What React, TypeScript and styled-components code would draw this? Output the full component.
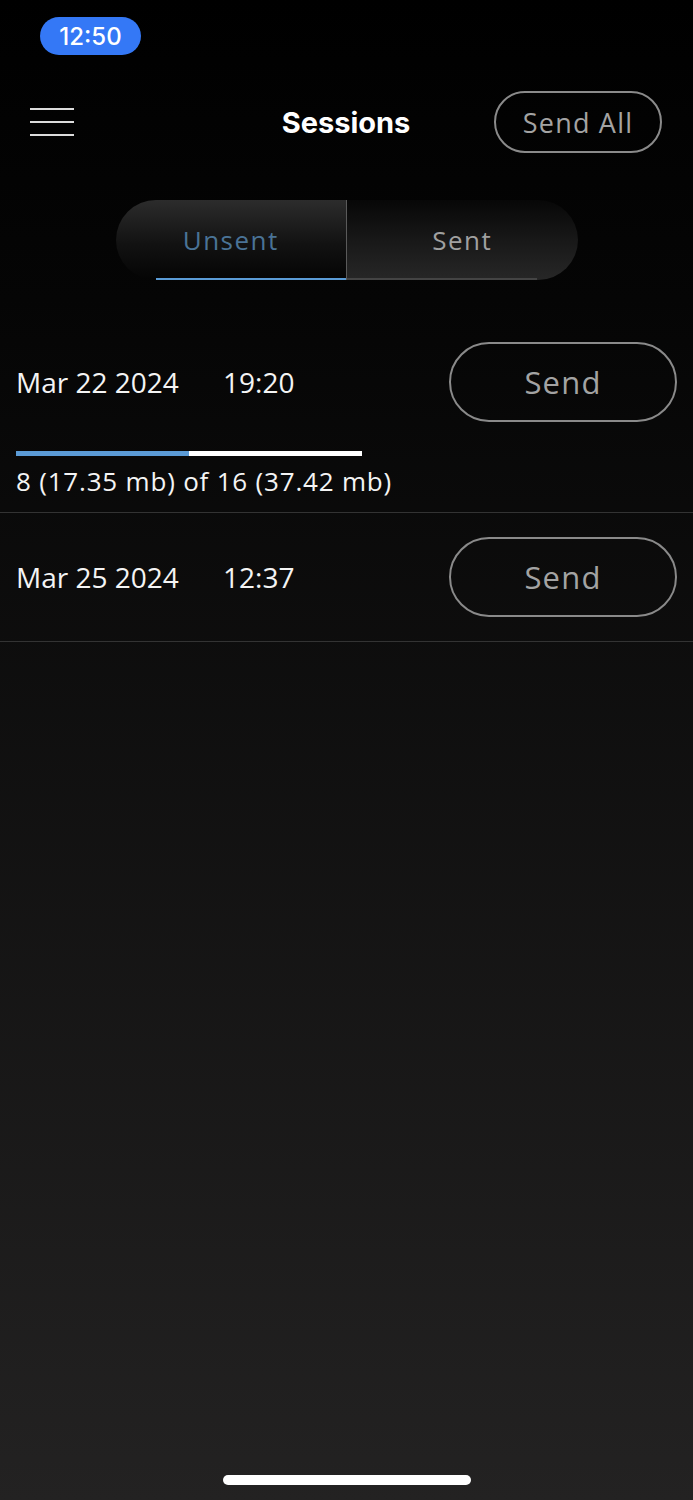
import React, { useState } from 'react';
import styled, { createGlobalStyle } from 'styled-components';

type Session = {
  id: number;
  date: string;
  time: string;
  progress?: { done: number; doneMb: number; total: number; totalMb: number };
};

const sessions: Session[] = [
  { id: 1, date: 'Mar 22 2024', time: '19:20', progress: { done: 8, doneMb: 17.35, total: 16, totalMb: 37.42 } },
  { id: 2, date: 'Mar 25 2024', time: '12:37' },
];

const GlobalStyle = createGlobalStyle`
  html, body {
    margin: 0;
    padding: 0;
    background: #000;
  }
  * {
    box-sizing: border-box;
  }
`;

const Page = styled.div`
  width: 693px;
  height: 1500px;
  display: flex;
  flex-direction: column;
  background: linear-gradient(180deg, #000 0%, #050505 20%, #232222 100%);
  font-family: 'Open Sans', 'Liberation Sans', sans-serif;
  color: #f2f2f2;
  overflow: hidden;
`;

const StatusBar = styled.div`
  padding: 17px 0 0 40px;
  height: 55px;
`;

const ClockPill = styled.div`
  width: 101px;
  height: 38px;
  border-radius: 19px;
  background: #3478f6;
  color: #fff;
  font-family: Inter, 'Liberation Sans', sans-serif;
  font-weight: 500;
  font-size: 24px;
  display: flex;
  align-items: center;
  justify-content: center;
`;

const Header = styled.header`
  margin-top: 36px;
  height: 62px;
  padding: 0 31px 0 30px;
  display: grid;
  grid-template-columns: 1fr auto 1fr;
  align-items: center;
`;

const MenuButton = styled.button`
  justify-self: start;
  background: none;
  border: none;
  padding: 0;
  width: 44px;
  height: 30px;
  display: flex;
  cursor: pointer;
`;

const Title = styled.h1`
  margin: 0;
  font-family: Inter, 'Liberation Sans', sans-serif;
  font-weight: 700;
  font-size: 29px;
  color: #fff;
`;

const OutlineButton = styled.button<{ $w: number; $h: number; $size: number }>`
  justify-self: end;
  width: ${(p) => p.$w}px;
  height: ${(p) => p.$h}px;
  border-radius: ${(p) => p.$h / 2}px;
  border: 2px solid #8a8a8a;
  background: transparent;
  color: #a3a3a3;
  font-family: 'Open Sans', 'Liberation Sans', sans-serif;
  font-size: ${(p) => p.$size}px;
  letter-spacing: 1.2px;
  display: flex;
  align-items: center;
  justify-content: center;
  padding: 0;
  flex-shrink: 0;
  cursor: pointer;
`;

const Segments = styled.div`
  margin: 47px auto 0;
  display: flex;
  width: 462px;
  height: 80px;
`;

const Segment = styled.button<{ $side: 'left' | 'right'; $active: boolean }>`
  position: relative;
  flex: 1;
  border: none;
  padding: 0;
  font-family: 'Open Sans', 'Liberation Sans', sans-serif;
  font-size: 26px;
  letter-spacing: 1.5px;
  cursor: pointer;
  color: ${(p) => (p.$active ? '#4a7396' : '#a0a0a0')};
  border-radius: ${(p) => (p.$side === 'left' ? '40px 0 0 40px' : '0 40px 40px 0')};
  background: ${(p) =>
    p.$side === 'left'
      ? 'linear-gradient(180deg, #2c2c2c 0%, #121212 55%, #040404 100%)'
      : 'linear-gradient(180deg, #070707 0%, #181818 50%, #272727 100%)'};
  border-left: ${(p) => (p.$side === 'right' ? '1px solid #5a5a5a' : 'none')};

  &::after {
    content: '';
    position: absolute;
    bottom: 0;
    height: 2px;
    left: ${(p) => (p.$side === 'left' ? '40px' : '0')};
    right: ${(p) => (p.$side === 'left' ? '0' : '41px')};
    background: ${(p) => (p.$active ? '#5a9bd6' : '#444')};
  }
`;

const List = styled.div`
  margin-top: 38px;
`;

const Row = styled.div`
  border-bottom: 1px solid #333;
  padding: 0 16px;
`;

const RowMain = styled.div`
  height: 128px;
  display: flex;
  align-items: center;
`;

const DateText = styled.span`
  width: 207px;
  font-size: 28px;
  color: #f4f4f4;
`;

const TimeText = styled.span`
  flex: 1;
  font-size: 28px;
  color: #f4f4f4;
`;

const Progress = styled.div`
  padding: 5px 0 16px;
`;

const Track = styled.div`
  width: 346px;
  height: 5px;
  background: #fff;
  display: flex;
`;

const Fill = styled.div`
  height: 100%;
  background: #5b9bd6;
`;

const ProgressText = styled.div`
  margin-top: 10px;
  line-height: 30px;
  font-size: 26px;
  letter-spacing: 0.8px;
  color: #f4f4f4;
`;

const Spacer = styled.div`
  flex: 1;
`;

const HomeIndicator = styled.div`
  width: 248px;
  height: 10px;
  border-radius: 5px;
  background: #fff;
  margin: 0 auto 15px;
`;

const HamburgerIcon = () => (
  <svg width="44" height="30" viewBox="0 0 44 30" fill="none">
    <path d="M0 2h44M0 15h44M0 28h44" stroke="#dcdcdc" strokeWidth="2" />
  </svg>
);

export default function App() {
  const [tab, setTab] = useState<'unsent' | 'sent'>('unsent');

  return (
    <>
      <GlobalStyle />
      <Page>
        <StatusBar>
          <ClockPill>12:50</ClockPill>
        </StatusBar>

        <Header>
          <MenuButton aria-label="Menu">
            <HamburgerIcon />
          </MenuButton>
          <Title>Sessions</Title>
          <OutlineButton $w={168} $h={62} $size={27}>Send All</OutlineButton>
        </Header>

        <Segments>
          <Segment $side="left" $active={tab === 'unsent'} onClick={() => setTab('unsent')}>
            Unsent
          </Segment>
          <Segment $side="right" $active={tab === 'sent'} onClick={() => setTab('sent')}>
            Sent
          </Segment>
        </Segments>

        <List>
          {sessions.map((s) => (
            <Row key={s.id}>
              <RowMain>
                <DateText>{s.date}</DateText>
                <TimeText>{s.time}</TimeText>
                <OutlineButton $w={228} $h={80} $size={31}>Send</OutlineButton>
              </RowMain>
              {s.progress && (
                <Progress>
                  <Track>
                    <Fill style={{ width: `${(s.progress.done / s.progress.total) * 100}%` }} />
                  </Track>
                  <ProgressText>
                    {s.progress.done} ({s.progress.doneMb} mb) of {s.progress.total} ({s.progress.totalMb} mb)
                  </ProgressText>
                </Progress>
              )}
            </Row>
          ))}
        </List>

        <Spacer />
        <HomeIndicator />
      </Page>
    </>
  );
}
